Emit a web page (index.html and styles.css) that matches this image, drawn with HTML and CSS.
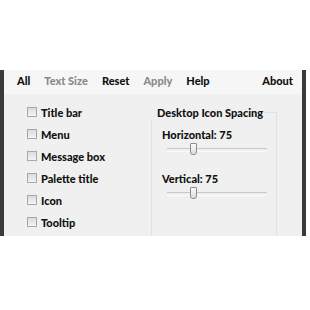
FILE: index.html
```html
<!DOCTYPE html>
<html lang="en">
<head>
  <meta charset="UTF-8" />
  <title>Display Settings</title>
  <link rel="stylesheet" href="styles.css">
</head>
<body>

  <div class="window">
    <!-- Menu bar -->
    <div class="menubar">
      <span class="item">All</span>
      <span class="item off">Text Size</span>
      <span class="item">Reset</span>
      <span class="item off">Apply</span>
      <span class="item">Help</span>
      <span class="item about">About</span>
    </div>

    <!-- Content -->
    <div class="content">
      <div class="checks">
        <label class="check"><span class="box"></span>Title bar</label>
        <label class="check"><span class="box"></span>Menu</label>
        <label class="check"><span class="box"></span>Message box</label>
        <label class="check"><span class="box"></span>Palette title</label>
        <label class="check"><span class="box"></span>Icon</label>
        <label class="check"><span class="box"></span>Tooltip</label>
      </div>

      <fieldset class="group">
        <legend>Desktop Icon Spacing</legend>
        <div class="field">
          <div class="field-label">Horizontal: 75</div>
          <div class="slider"><span class="thumb"></span></div>
        </div>
        <div class="field">
          <div class="field-label">Vertical: 75</div>
          <div class="slider"><span class="thumb"></span></div>
        </div>
      </fieldset>
    </div>
  </div>

</body>
</html>
```

FILE: styles.css
```css
body {
  margin: 0;
  background: #fff;
  font-family: Lato, "Noto Sans", sans-serif;
  font-size: 11px;
  font-weight: 900;
  color: #111;
  white-space: nowrap;
}

.window {
  margin-top: 70px;
  width: 298px;
  height: 166px;
  border-left: 4px solid #3a3a3a;
  border-right: 4px solid #3a3a3a;
  background: #f0f0f0;
  display: flex;
  flex-direction: column;
}

/* Menu bar */
.menubar {
  display: flex;
  align-items: center;
  height: 21px;
  padding: 0 9px 3px 13px;
  background: #f6f6f6;
}

.item {
  margin-right: 14px;
}

.item.off {
  color: #8a8a8a;
}

.item.about {
  margin-left: auto;
  margin-right: 0;
}

.content {
  flex: 1;
  display: flex;
  padding-top: 11px;
}

.checks {
  width: 124px;
  padding-left: 23px;
  display: flex;
  flex-direction: column;
  gap: 8px;
}

.check {
  display: flex;
  align-items: center;
  height: 14px;
}

.box {
  width: 8px;
  height: 8px;
  border: 1px solid #a8a8a8;
  background: linear-gradient(#dcdcdc, #f4f4f4);
  margin-right: 4px;
}

/* Group box */
.group {
  margin: 1px 0 0 0;
  width: 114px;
  min-width: 0;
  border: 1px solid #e2e2e2;
  border-bottom: none;
  padding: 9px 0 0 10px;
}

.group legend {
  padding: 0 2px 0 6px;
  margin-left: -11px;
}

.field-label {
  height: 14px;
}

.field + .field {
  margin-top: 20px;
}

.slider {
  position: relative;
  margin: 6px 9px 0 5px;
  height: 2px;
  border-top: 1px solid #c8c8c8;
  border-bottom: 1px solid #fafafa;
}

.thumb {
  position: absolute;
  left: 23px;
  top: -6px;
  width: 5px;
  height: 10px;
  border: 1px solid #8c8c8c;
  border-radius: 1px 1px 3px 3px;
  background: linear-gradient(#fafafa, #dcdcdc);
}
```
